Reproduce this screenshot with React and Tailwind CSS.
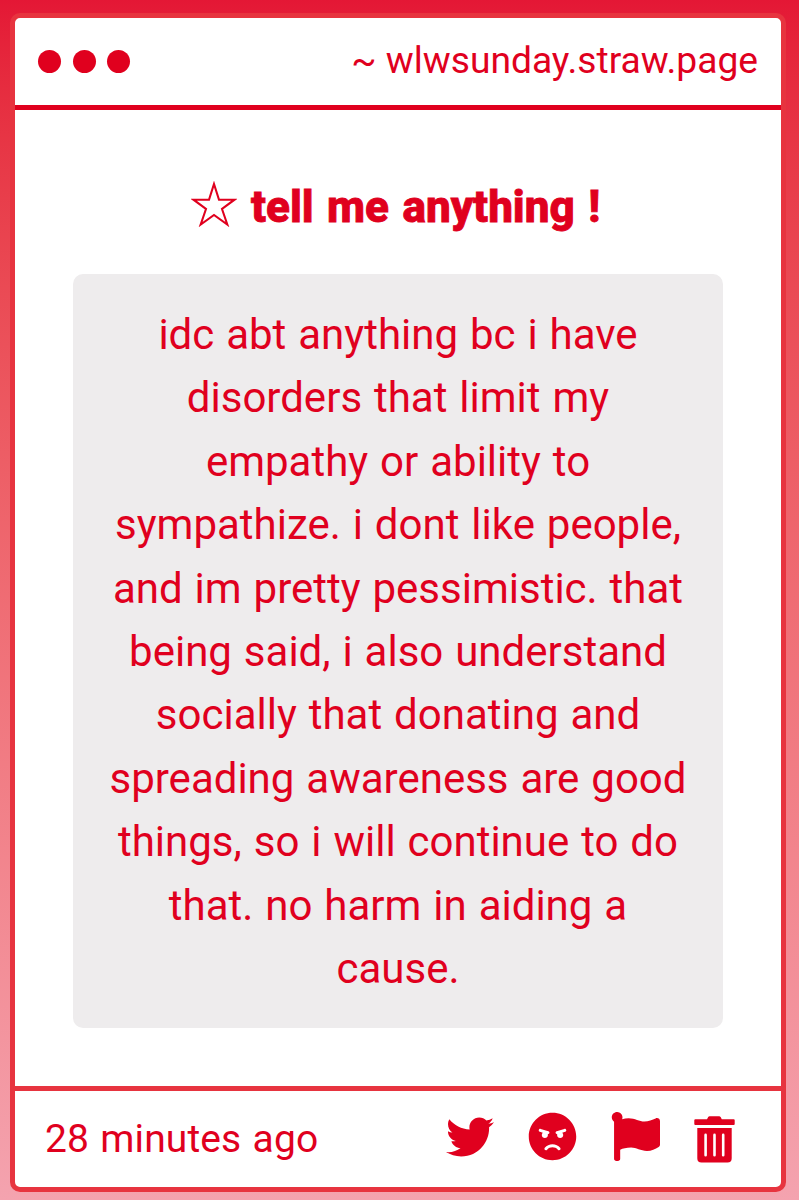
import { FaTwitter, FaAngry, FaFlag } from 'react-icons/fa';

const lines = [
  'idc abt anything bc i have',
  'disorders that limit my',
  'empathy or ability to',
  'sympathize. i dont like people,',
  'and im pretty pessimistic. that',
  'being said, i also understand',
  'socially that donating and',
  'spreading awareness are good',
  'things, so i will continue to do',
  'that. no harm in aiding a',
  'cause.',
];

function TrashIcon({ className }) {
  return (
    <svg className={className} viewBox="0 0 41 47" fill="currentColor">
      <path d="M1.3 3.2H13L14.2 1Q14.7.2 15.6.2H25.2Q26.1.2 26.6 1L27.8 3.2H39.7Q40.7 3.2 40.7 4.2V8Q40.7 9 39.7 9H1.3Q.3 9 .3 8V4.2Q.3 3.2 1.3 3.2Z" />
      <path
        fillRule="evenodd"
        d="M3.3 12H37.7V42.2Q37.7 46.5 33.5 46.5H7.5Q3.3 46.5 3.3 42.2ZM10.3 19V39.2Q10.3 40.6 11.6 40.6T12.9 39.2V19Q12.9 17.6 11.6 17.6T10.3 19ZM19.2 19V39.2Q19.2 40.6 20.5 40.6T21.8 39.2V19Q21.8 17.6 20.5 17.6T19.2 19ZM27.9 19V39.2Q27.9 40.6 29.2 40.6T30.5 39.2V19Q30.5 17.6 29.2 17.6T27.9 19Z"
      />
    </svg>
  );
}

export default function App() {
  return (
    <div className="h-[1200px] w-[799px] overflow-hidden bg-linear-to-b from-[#e41735] to-[#f4a3af] pt-[13px] pl-[10px] font-['Roboto',sans-serif] text-[#e0001e]">
      <div className="flex h-[1179px] w-[776px] flex-col overflow-hidden rounded-[10px] border-5 border-[#e7343f] bg-white">
        {/* Header */}
        <header className="flex h-[92px] shrink-0 items-center justify-between border-b-5 border-[#e0001e] pr-[23px] pl-[23px]">
          <div className="flex gap-[11.5px]">
            <span className="size-[23px] rounded-full bg-[#e0001e]" />
            <span className="size-[23px] rounded-full bg-[#e0001e]" />
            <span className="size-[23px] rounded-full bg-[#e0001e]" />
          </div>
          <p className="pb-[2px] text-[37.2px] leading-none whitespace-nowrap">~ wlwsunday.straw.page</p>
        </header>

        {/* Message */}
        <main className="flex min-h-0 flex-1 flex-col pl-[58px]">
          <div className="flex h-[164px] w-[650px] shrink-0 items-start pt-[70px] pl-[118px]">
            <svg className="mt-[1px] h-[46px] w-[46px] shrink-0" viewBox="0 0 46 46" fill="none" stroke="currentColor" strokeWidth="2.1">
              <path d="M23 3L28 18.7H43.5L31 28L36.3 43.5L23 34L9.7 43.5L15 28L2.5 18.7H18Z" />
            </svg>
            <h1 className="ml-[14px] text-[44px] leading-[55px] font-extrabold [word-spacing:2.5px] whitespace-nowrap [-webkit-text-stroke:0.9px_#e0001e]">tell me anything !</h1>
          </div>
          <div className="h-[754px] w-[650px] shrink-0 rounded-[10px] bg-[#eeeced] pt-[29px] text-center text-[42px] leading-[63.4px] [word-spacing:1.5px]">
            {lines.map((line) => (
              <p key={line} className="whitespace-nowrap">{line}</p>
            ))}
          </div>
        </main>

        {/* Footer */}
        <footer className="flex h-[101px] shrink-0 items-center justify-between border-t-5 border-[#e7343f] pr-[46px] pl-[30px]">
          <p className="text-[39px] leading-none tracking-[0.1px] [word-spacing:1.5px] whitespace-nowrap">28 minutes ago</p>
          <div className="flex items-center pb-[5px] text-[49px]">
            <FaTwitter className="size-[48px]" />
            <FaAngry className="ml-[34px]" />
            <FaFlag className="ml-[34px]" />
            <TrashIcon className="mt-[5px] ml-[34px] h-[47px] w-[41px]" />
          </div>
        </footer>
      </div>
    </div>
  );
}
